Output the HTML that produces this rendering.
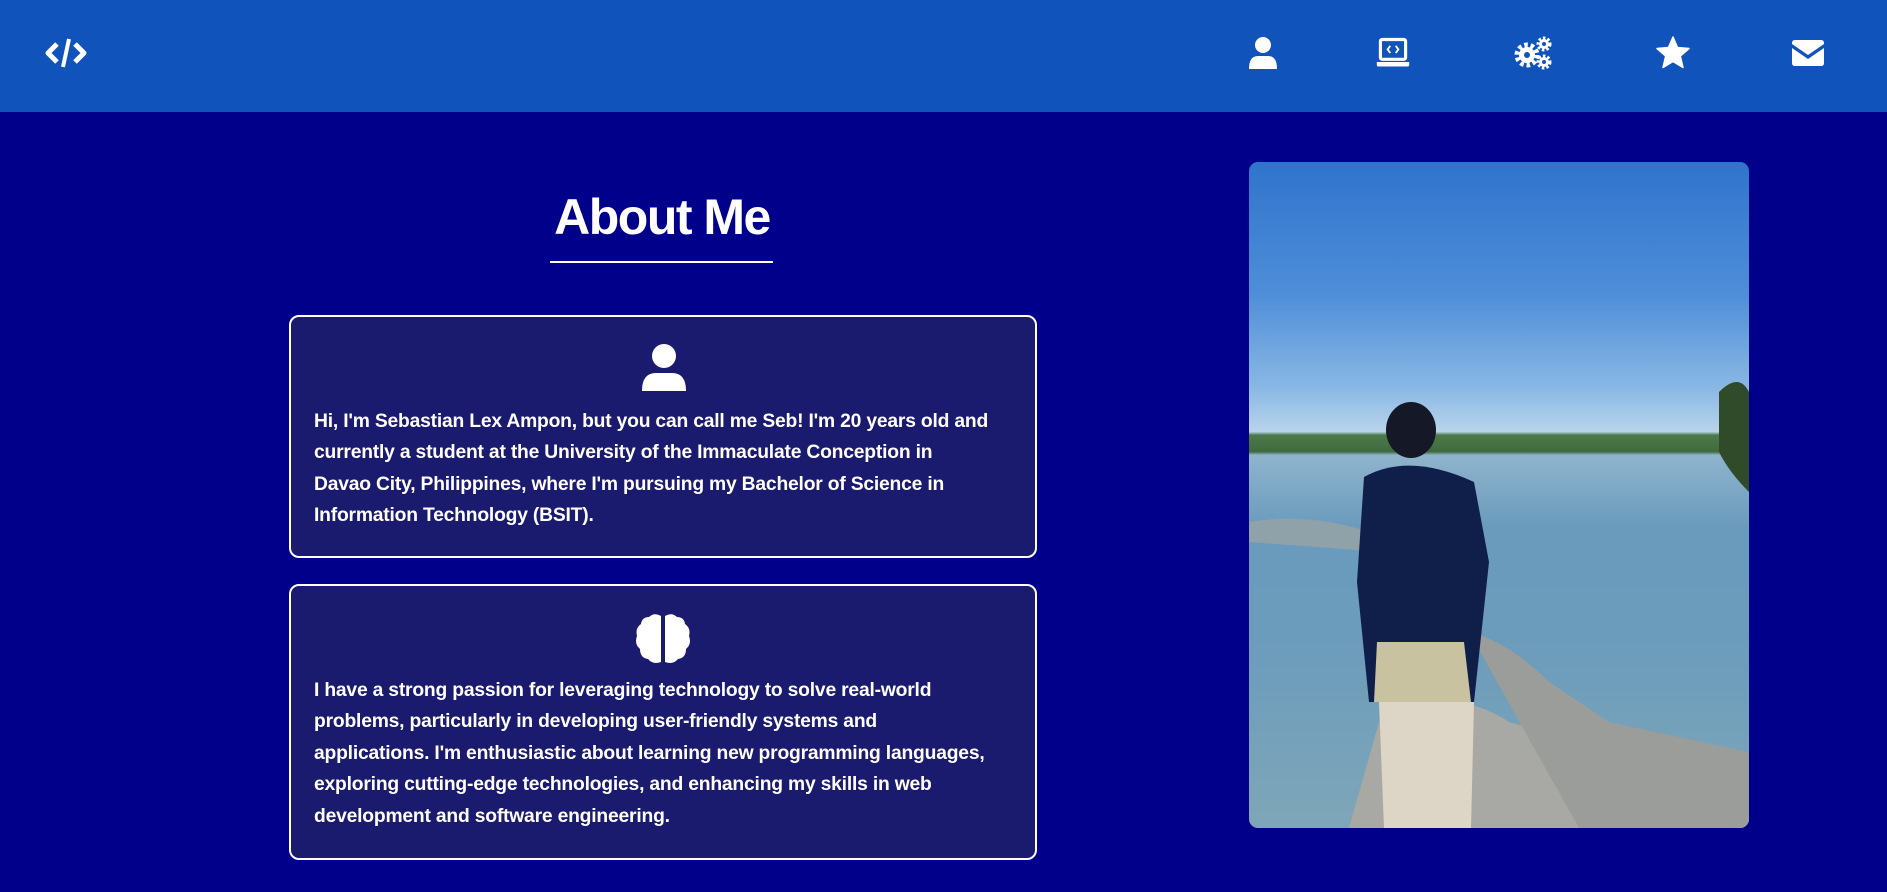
<!DOCTYPE html>
<html><head><meta charset="utf-8"><style>
*{margin:0;padding:0;box-sizing:border-box}
html,body{width:1887px;height:892px;overflow:hidden;background:#00008b;font-family:"Liberation Sans",sans-serif;color:#fff}
header{position:absolute;left:0;top:0;width:1887px;height:112px;background:#1053bb}
.ic{position:absolute;top:35px;width:36px;height:36px}
h1{position:absolute;left:530px;width:264px;top:188px;text-align:center;font-size:50px;font-weight:bold;letter-spacing:-1.5px}
.ul{position:absolute;left:550px;top:261px;width:223px;height:2px;background:#fff}
.card{position:absolute;left:289px;width:748px;background:#1a1a6e;border:2px solid #fff;border-radius:10px}
.card p{position:absolute;left:23px;font-size:19.3px;font-weight:bold;line-height:31.4px;white-space:nowrap;letter-spacing:-0.2px}
.photo{position:absolute;left:1249px;top:162px;width:500px;height:666px;border-radius:9px;overflow:hidden;
background:linear-gradient(180deg,#2f74cc 0%,#4f8ed8 20%,#8ab8e4 34%,#b9d4ea 40.5%,#4e7a4a 41%,#3f6a3e 43.5%,#8fb4cc 44%,#6a9abc 55%,#6d9dbb 75%,#7fa6b8 100%)}
</style></head><body>
<header>
<svg class="ic" style="left:44px;top:35px;width:44px" viewBox="0 0 44 36"><path d="M13 9 L4 18 L13 27" stroke="#fff" stroke-width="5" fill="none" stroke-linejoin="round"/><path d="M31 9 L40 18 L31 27" stroke="#fff" stroke-width="5" fill="none" stroke-linejoin="round"/><path d="M25 4 L19 32" stroke="#fff" stroke-width="4"/></svg>
<svg class="ic" style="left:1245px" viewBox="0 0 36 36"><circle cx="18" cy="10" r="8" fill="#fff"/><path d="M4 34 Q4 21 13 21 H23 Q32 21 32 34Z" fill="#fff"/></svg>
<svg class="ic" style="left:1375px" viewBox="0 0 40 36"><rect x="6" y="3" width="28" height="22" rx="2" fill="none" stroke="#fff" stroke-width="3.5"/><path d="M2 28 H38 V31 Q38 33 36 33 H4 Q2 33 2 31Z" fill="#fff"/><path d="M17 10 L14 14 L17 18 M23 10 L26 14 L23 18" stroke="#fff" stroke-width="2" fill="none"/></svg>
<svg class="ic" style="left:1513px;width:40px" viewBox="0 0 40 36"><circle cx="14" cy="20" r="10" fill="none" stroke="#fff" stroke-width="5" stroke-dasharray="3.5 2.8"/><circle cx="14" cy="20" r="8" fill="#fff"/><circle cx="14" cy="20" r="3" fill="#1053bb"/><circle cx="31" cy="9" r="6" fill="none" stroke="#fff" stroke-width="3" stroke-dasharray="2.5 2"/><circle cx="31" cy="9" r="5" fill="#fff"/><circle cx="31" cy="9" r="2" fill="#1053bb"/><circle cx="31" cy="27" r="6" fill="none" stroke="#fff" stroke-width="3" stroke-dasharray="2.5 2"/><circle cx="31" cy="27" r="5" fill="#fff"/><circle cx="31" cy="27" r="2" fill="#1053bb"/></svg>
<svg class="ic" style="left:1655px" viewBox="0 0 36 36"><path d="M18 2 L22.5 12.5 L34 13.5 L25.3 21 L28 32.5 L18 26.5 L8 32.5 L10.7 21 L2 13.5 L13.5 12.5Z" fill="#fff" stroke="#fff" stroke-width="1.5" stroke-linejoin="round"/></svg>
<svg class="ic" style="left:1790px" viewBox="0 0 36 36"><path d="M2 8 Q2 5 5 5 H31 Q34 5 34 8 V9 L18 20 L2 9Z M2 13 L18 24 L34 13 V28 Q34 31 31 31 H5 Q2 31 2 28Z" fill="#fff"/></svg>
</header>
<h1>About Me</h1>
<div class="ul"></div>
<div class="card" style="top:315px;height:243px">
<svg style="position:absolute;left:349px;top:26px" width="48" height="50" viewBox="0 0 48 50"><circle cx="24" cy="13" r="12" fill="#fff"/><path d="M2 48 Q2 30 16 30 H32 Q46 30 46 48Z" fill="#fff"/></svg>
<p style="top:89px">Hi, I'm Sebastian Lex Ampon, but you can call me Seb! I'm 20 years old and<br>currently a student at the University of the Immaculate Conception in<br>Davao City, Philippines, where I'm pursuing my Bachelor of Science in<br>Information Technology (BSIT).</p>
</div>
<div class="card" style="top:584px;height:276px">
<svg style="position:absolute;left:343px;top:26px" width="58" height="54" viewBox="0 0 58 54"><path d="M27 4 Q20 0 15 5 Q8 5 7 12 Q1 16 3 24 Q0 32 6 37 Q6 46 14 47 Q19 53 27 50Z" fill="#fff"/><path d="M31 4 Q38 0 43 5 Q50 5 51 12 Q57 16 55 24 Q58 32 52 37 Q52 46 44 47 Q39 53 31 50Z" fill="#fff"/></svg>
<p style="top:89px">I have a strong passion for leveraging technology to solve real-world<br>problems, particularly in developing user-friendly systems and<br>applications. I'm enthusiastic about learning new programming languages,<br>exploring cutting-edge technologies, and enhancing my skills in web<br>development and software engineering.</p>
</div>
<div class="photo">
<svg width="500" height="666" viewBox="0 0 500 666" style="position:absolute;left:0;top:0">
<path d="M0 360 Q60 350 120 370 L135 390 L0 380Z" fill="#8fa2aa"/>
<path d="M100 666 L130 560 Q200 520 260 560 L330 580 L400 600 L500 610 V666Z" fill="#a8a9a5"/>
<path d="M220 470 Q260 480 300 520 L360 560 L500 590 V666 L330 666Z" fill="#9b9d9a"/>
<path d="M470 230 Q490 210 500 230 V330 Q480 310 470 290Z" fill="#2f4b2a"/>
<ellipse cx="162" cy="268" rx="25" ry="28" fill="#141827"/>
<path d="M115 315 Q160 290 225 320 L240 400 L225 540 L120 540 L108 420Z" fill="#101e4a"/>
<path d="M128 480 L215 480 L222 540 L125 540Z" fill="#c8c2a0"/>
<path d="M130 540 L225 540 L222 666 L135 666Z" fill="#ddd6c6"/>
</svg>
</div>
</body></html>
